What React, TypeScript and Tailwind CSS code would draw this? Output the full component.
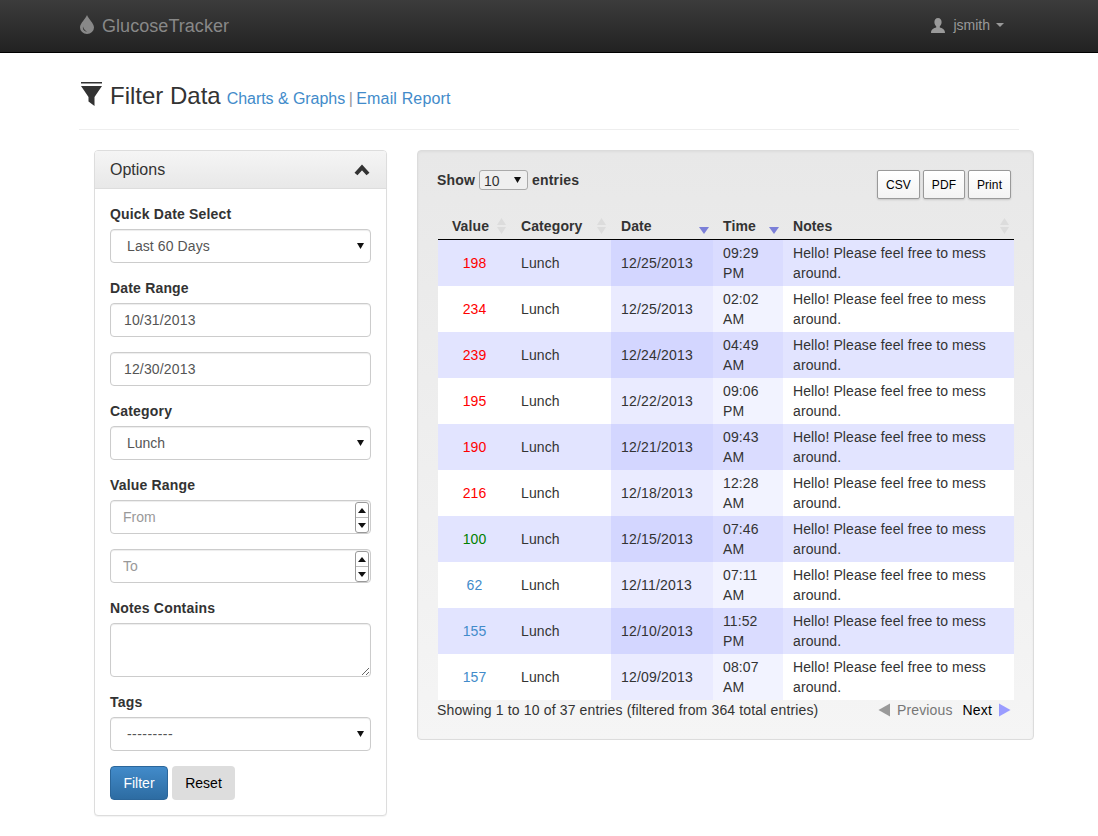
import { ReactNode } from 'react';

interface Row {
  value: number;
  color: string;
  date: string;
  time: string;
}

const RED = 'text-[#ff0000]';
const GREEN = 'text-[#008000]';
const BLUE = 'text-[#428bca]';

const rows: Row[] = [
  { value: 198, color: RED, date: '12/25/2013', time: '09:29 PM' },
  { value: 234, color: RED, date: '12/25/2013', time: '02:02 AM' },
  { value: 239, color: RED, date: '12/24/2013', time: '04:49 AM' },
  { value: 195, color: RED, date: '12/22/2013', time: '09:06 PM' },
  { value: 190, color: RED, date: '12/21/2013', time: '09:43 AM' },
  { value: 216, color: RED, date: '12/18/2013', time: '12:28 AM' },
  { value: 100, color: GREEN, date: '12/15/2013', time: '07:46 AM' },
  { value: 62, color: BLUE, date: '12/11/2013', time: '07:11 AM' },
  { value: 155, color: BLUE, date: '12/10/2013', time: '11:52 PM' },
  { value: 157, color: BLUE, date: '12/09/2013', time: '08:07 AM' },
];

const fieldClass =
  'block w-full h-[34px] rounded-[4px] border border-[#ccc] bg-white px-3 text-sm text-[#555] shadow-[inset_0_1px_1px_rgba(0,0,0,0.075)] placeholder:text-[#999]';

const Label = ({ children }: { children: ReactNode }) => (
  <label className="mb-[5px] block text-sm leading-5 font-bold tracking-[0.18px] text-[#333]">{children}</label>
);

const SelectArrow = ({ className }: { className: string }) => (
  <svg className={`pointer-events-none absolute ${className}`} width="7" height="6" viewBox="0 0 7 6">
    <path d="M0 0H7L3.5 6Z" fill="#111" />
  </svg>
);

const FormSelect = ({ value, tracking }: { value: string; tracking: string }) => (
  <div className="relative">
    <select className={`${fieldClass} appearance-none pl-4 ${tracking}`} defaultValue={value}>
      <option>{value}</option>
    </select>
    <SelectArrow className="right-[7px] top-[14px]" />
  </div>
);

const SortBoth = () => (
  <svg className="absolute right-[5px] top-[5px]" width="9" height="16" viewBox="0 0 9 16">
    <path d="M4.5 0L9 7H0Z M0 9H9L4.5 16Z" fill="#dcdcdc" />
  </svg>
);

const SortDesc = () => (
  <svg className="absolute right-[4px] top-[14px]" width="10" height="7" viewBox="0 0 10 7">
    <path d="M0 0H10L5 7Z" fill="#7b7fd8" />
  </svg>
);

const Spinner = () => (
  <div className="absolute right-[2px] top-[2px] flex h-[31px] w-[14px] flex-col rounded-[3px] border border-[#999] bg-white">
    <div className="flex flex-1 items-center justify-center border-b border-[#bbb]">
      <svg width="8" height="5" viewBox="0 0 8 5">
        <path d="M4 0L8 5H0Z" fill="#111" />
      </svg>
    </div>
    <div className="flex flex-1 items-center justify-center">
      <svg width="8" height="5" viewBox="0 0 8 5">
        <path d="M0 0H8L4 5Z" fill="#111" />
      </svg>
    </div>
  </div>
);

const OptionsPanel = () => (
  <div className="w-[293px] shrink-0 rounded-[4px] border border-[#ddd] bg-white shadow-[0_1px_1px_rgba(0,0,0,0.05)]">
    <div className="flex h-[38px] items-center justify-between rounded-t-[3px] border-b border-[#ddd] bg-gradient-to-b from-[#f5f5f5] to-[#e8e8e8] pl-[15px] pr-4">
      <span className="text-base text-[#333]">Options</span>
      <svg width="16" height="12" viewBox="0 0 16 12">
        <path d="M2 10L8 3.5L14 10" fill="none" stroke="#333" strokeWidth="4" />
      </svg>
    </div>
    <form className="flex flex-col gap-[15px] p-[15px]">
      <div>
        <Label>Quick Date Select</Label>
        <FormSelect value="Last 60 Days" tracking="tracking-[0.1px]" />
      </div>
      <div>
        <Label>Date Range</Label>
        <input className={`${fieldClass} pl-[13px] tracking-[0.15px]`} defaultValue="10/31/2013" />
      </div>
      <input className={`${fieldClass} pl-[13px] tracking-[0.15px]`} defaultValue="12/30/2013" />
      <div>
        <Label>Category</Label>
        <FormSelect value="Lunch" tracking="tracking-normal" />
      </div>
      <div>
        <Label>Value Range</Label>
        <div className="relative">
          <input className={fieldClass} placeholder="From" />
          <Spinner />
        </div>
      </div>
      <div className="relative">
        <input className={fieldClass} placeholder="To" />
        <Spinner />
      </div>
      <div>
        <Label>Notes Contains</Label>
        <textarea className="block h-[54px] w-full rounded-[4px] border border-[#ccc] bg-white shadow-[inset_0_1px_1px_rgba(0,0,0,0.075)]" />
      </div>
      <div>
        <Label>Tags</Label>
        <FormSelect value="---------" tracking="tracking-[0.45px]" />
      </div>
      <div className="flex gap-1">
        <button
          type="button"
          className="h-[34px] w-[58px] rounded-[4px] border border-[#2b669a] bg-gradient-to-b from-[#428bca] to-[#2d6ca2] text-sm text-white"
        >
          Filter
        </button>
        <button type="button" className="h-[34px] w-[63px] rounded-[4px] bg-[#ddd] text-sm text-black">
          Reset
        </button>
      </div>
    </form>
  </div>
);

const ExportButton = ({ label, width }: { label: string; width: string }) => (
  <button
    type="button"
    className={`h-[29px] rounded-[2px] border border-[#999] bg-gradient-to-b from-white to-[#f3f3f3] text-xs tracking-[0.1px] text-black shadow-[0_1px_2px_rgba(0,0,0,0.15)] ${width}`}
  >
    {label}
  </button>
);

const DataPanel = () => (
  <div className="w-[617px] shrink-0 self-start rounded-[4px] border border-[#dcdcdc] bg-gradient-to-b from-[#e8e8e8] to-[#f5f5f5] p-[19px] shadow-[inset_0_1px_3px_rgba(0,0,0,0.05)]">
    <div className="flex h-[29px] items-start justify-between pr-[3px]">
      <div className="flex h-5 items-center text-sm font-bold tracking-[0.18px] text-[#333]">
        Show
        <div className="relative mx-1">
          <select
            className="block h-5 w-[49px] appearance-none rounded-[3px] border border-[#aaa] bg-[#efefef] pl-1 text-sm font-normal tracking-normal"
            defaultValue="10"
          >
            <option>10</option>
          </select>
          <SelectArrow className="right-[7px] top-[7px]" />
        </div>
        entries
      </div>
      <div className="flex gap-[3px]">
        <ExportButton label="CSV" width="w-[43px]" />
        <ExportButton label="PDF" width="w-[42px]" />
        <ExportButton label="Print" width="w-[43px]" />
      </div>
    </div>

    <table className="ml-px mt-[14px] w-[576px] table-fixed border-separate border-spacing-0 text-sm leading-5 tracking-[0.1px] text-[#333]">
      <colgroup>
        <col className="w-[73px]" />
        <col className="w-[100px]" />
        <col className="w-[102px]" />
        <col className="w-[70px]" />
        <col className="w-[231px]" />
      </colgroup>
      <thead>
        <tr>
          <th className="relative border-b border-black py-[3px] pl-[10px] pr-[18px] text-center font-bold">
            Value
            <SortBoth />
          </th>
          <th className="relative border-b border-black px-[10px] py-[3px] text-left font-bold">
            Category
            <SortBoth />
          </th>
          <th className="relative border-b border-black px-[10px] py-[3px] text-left font-bold">
            Date
            <SortDesc />
          </th>
          <th className="relative border-b border-black px-[10px] py-[3px] text-left font-bold">
            Time
            <SortDesc />
          </th>
          <th className="relative border-b border-black px-[10px] py-[3px] text-left font-bold">
            Notes
            <SortBoth />
          </th>
        </tr>
      </thead>
      <tbody>
        {rows.map((row, i) => {
          const odd = i % 2 === 0;
          return (
            <tr key={i} className={odd ? 'bg-[#e2e4ff]' : 'bg-white'}>
              <td className={`px-[10px] py-[3px] text-center ${row.color}`}>{row.value}</td>
              <td className="px-[10px] py-[3px]">Lunch</td>
              <td className={`px-[10px] py-[3px] tracking-[0.2px] ${odd ? 'bg-[#d3d6ff]' : 'bg-[#eaebff]'}`}>{row.date}</td>
              <td className={`px-[10px] py-[3px] ${odd ? 'bg-[#dadcff]' : 'bg-[#f2f3ff]'}`}>{row.time}</td>
              <td className="px-[10px] py-[3px]">Hello! Please feel free to mess around.</td>
            </tr>
          );
        })}
      </tbody>
    </table>

    <div className="flex h-5 items-center justify-between pr-[3px] text-sm tracking-[0.15px] text-[#333]">
      <span>Showing 1 to 10 of 37 entries (filtered from 364 total entries)</span>
      <div className="flex items-center">
        <svg width="13" height="14" viewBox="0 0 13 14" className="mr-[6px]">
          <path d="M12 0.5V13.5L0.5 7Z" fill="#999" />
        </svg>
        <span className="text-[#777]">Previous</span>
        <span className="ml-[10px] text-black">Next</span>
        <svg width="13" height="14" viewBox="0 0 13 14" className="ml-[6px]">
          <path d="M1 0.5V13.5L12.5 7Z" fill="#9a9cff" />
        </svg>
      </div>
    </div>
  </div>
);

export default function App() {
  return (
    <div className="min-h-[836px] bg-white font-['Liberation_Sans',Arial,sans-serif]">
      <nav className="h-[53px] border-b border-black bg-gradient-to-b from-[#3c3c3c] to-[#222]">
        <div className="mx-auto flex h-[52px] w-[970px] items-center justify-between pl-4 pr-[30px]">
          <div className="flex items-center gap-2">
            <svg width="14" height="19" viewBox="0 0 14 19" className="-mt-[3px]">
              <path
                fillRule="evenodd"
                d="M7 0C8 3.5 14 8 14 12.5A7 6.5 0 0 1 0 12.5C0 8 6 3.5 7 0ZM3 11.5C2.5 14 4 16.5 7 16.5C5 15.5 3.5 14 3 11.5Z"
                fill="#888"
              />
            </svg>
            <span className="text-lg tracking-[0.05px] text-[#888]">GlucoseTracker</span>
          </div>
          <div className="flex items-center pb-[2px] text-sm text-[#999]">
            <svg width="14" height="15" viewBox="0 0 14 15" className="mr-2">
              <path
                d="M7 0C9.3 0 10.6 1.7 10.6 4C10.6 6 9.8 7.5 8.8 8.3V9.6C11 10.4 14 11 14 15H0C0 11 3 10.4 5.2 9.6V8.3C4.2 7.5 3.4 6 3.4 4C3.4 1.7 4.7 0 7 0Z"
                fill="#999"
              />
            </svg>
            jsmith
            <svg width="8" height="4" viewBox="0 0 8 4" className="ml-[6px]">
              <path d="M0 0H8L4 4Z" fill="#999" />
            </svg>
          </div>
        </div>
      </nav>

      <div className="mx-auto w-[970px] px-[15px]">
        <div className="mt-[27px] flex h-8 items-center">
          <svg width="22" height="24" viewBox="0 0 22 24" className="ml-[2px] -mt-[5px]">
            <path d="M0 0H21V1.6H0Z M0 4H21L13.5 15V24L7.5 19.5V15Z" fill="#333" />
          </svg>
          <div className="ml-[7px] flex items-baseline">
            <span className="text-2xl leading-8 text-[#333]">Filter Data</span>
            <a className="ml-[6px] text-base tracking-[-0.05px] text-[#428bca]">Charts &amp; Graphs</a>
            <span className="mx-[3.5px] text-base text-[#999]">|</span>
            <a className="text-base tracking-[0.15px] text-[#428bca]">Email Report</a>
          </div>
        </div>
        <div className="mt-[17px] border-b border-[#eee]" />
      </div>

      <div className="mx-auto mt-5 flex w-[970px] gap-[30px] pb-5 pl-[30px]">
        <OptionsPanel />
        <DataPanel />
      </div>
    </div>
  );
}
